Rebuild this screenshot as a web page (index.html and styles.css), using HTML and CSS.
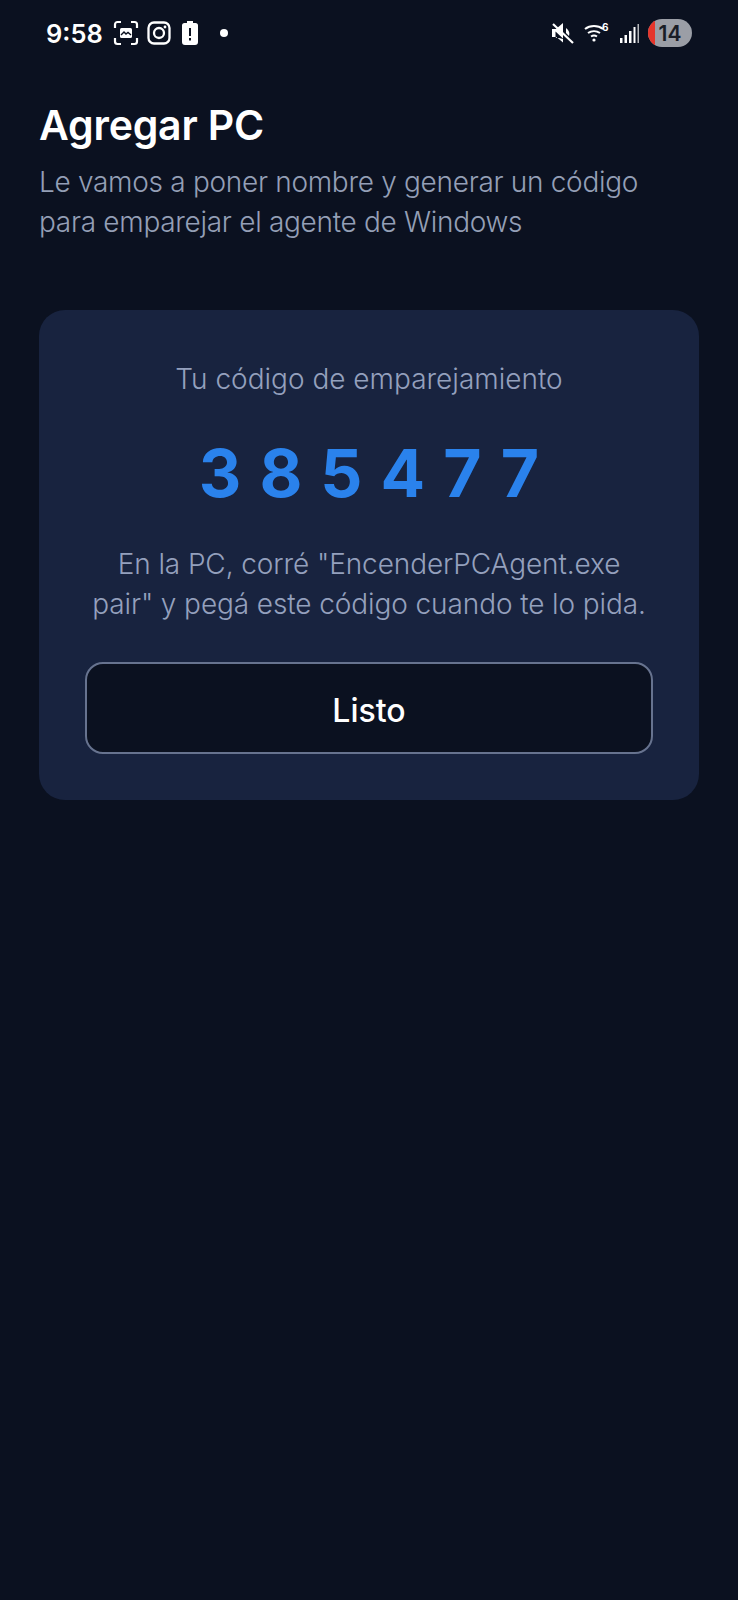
FILE: index.html
```html
<!DOCTYPE html>
<html lang="es">
<head>
  <meta charset="UTF-8" />
  <title>Agregar PC</title>
  <link rel="stylesheet" href="styles.css">
</head>
<body>
  <div id="app">
    <div class="status">
      <div class="status-left">
        <span class="time">9:58</span>
        <svg class="ic" width="26" height="26" viewBox="0 0 26 26" fill="none" stroke="#fff" stroke-width="2.2">
          <path d="M2 8V4.500A2.500 2.500 0 0 1 4.500 2H8M18 2h3.500A2.500 2.500 0 0 1 24 4.500V8M24 18v3.500a2.500 2.500 0 0 1-2.500 2.500H18M8 24H4.500A2.500 2.500 0 0 1 2 21.500V18"/>
          <rect x="7" y="8" width="12" height="10" rx="1.500" fill="#fff" stroke="none"/>
          <path d="M8 15l3-3 2 2 2-1.500 3 2.500" stroke="#0b1120" stroke-width="1.400"/>
        </svg>
        <svg class="ic" width="24" height="24" viewBox="0 0 24 24" fill="none" stroke="#fff" stroke-width="2.300">
          <rect x="1.500" y="1.500" width="21" height="21" rx="5.500"/>
          <circle cx="12" cy="12" r="5"/>
          <circle cx="18" cy="6" r="1.400" fill="#fff" stroke="none"/>
        </svg>
        <svg class="ic batt" width="16" height="24" viewBox="0 0 16 24">
          <path fill="#fff" fill-rule="evenodd" d="M5 0h6v2h2.500A2.500 2.500 0 0 1 16 4.500V21a3 3 0 0 1-3 3H3a3 3 0 0 1-3-3V4.500A2.500 2.500 0 0 1 2.500 2H5zM7 7v8h2V7zM7 17v2.500h2V17z"/>
        </svg>
        <span class="dot"></span>
      </div>
      <div class="status-right">
        <svg class="ic mute" width="22" height="22" viewBox="0 0 22 22">
          <path fill="#fff" d="M0 7h4l7-6v15.500L3.500 9.500V15H0z"/>
          <path fill="#fff" d="M3 15h1.500l6.500 5.500V17z"/>
          <path stroke="#fff" stroke-width="2.200" d="M1 2l20 19"/>
          <path fill="#fff" d="M14 6c3 2 4 5 3 8l-3-3z"/>
        </svg>
        <svg class="ic wifi" width="25" height="22" viewBox="0 0 25 22" fill="none" stroke="#fff" stroke-width="2">
          <path d="M1 7c5-4 13-4 18 0M4 11c3.500-2.500 8.500-2.500 12 0M7 14.500c2-1.300 4-1.300 6 0"/>
          <circle cx="10" cy="18" r="1.600" fill="#fff" stroke="none"/>
          <text x="18" y="9" class="wifi-six">6</text>
        </svg>
        <svg class="ic" width="20" height="22" viewBox="0 0 20 22" fill="#fff">
          <rect x="0" y="16" width="2.500" height="5"/>
          <rect x="4.500" y="13" width="2.500" height="8"/>
          <rect x="9" y="9" width="2.500" height="12"/>
          <rect x="13.500" y="5" width="2" height="16"/>
          <rect x="17.500" y="2" width="1.500" height="19" opacity=".7"/>
        </svg>
        <span class="badge"><span class="badge-fill"></span><span class="badge-num">14</span></span>
      </div>
    </div>

    <div class="page">
      <h1>Agregar PC</h1>
      <p class="sub">Le vamos a poner nombre y generar un código para emparejar el agente de Windows</p>

      <div class="card">
        <p class="label">Tu código de emparejamiento</p>
        <div class="code">385477</div>
        <p class="help">En la PC, corré "EncenderPCAgent.exe pair" y pegá este código cuando te lo pida.</p>
        <button class="btn">Listo</button>
      </div>
    </div>
  </div>
</body>
</html>
```

FILE: styles.css
```css
* {
  box-sizing: border-box;
}
body {
  margin: 0;
  background: #0b1120;
  font-family: Inter, "Noto Sans", sans-serif;
}
#app {
  width: 738px;
  height: 1600px;
  overflow: hidden;
}
.status {
  height: 66px;
  padding: 0 46px;
  display: flex;
  justify-content: space-between;
  align-items: center;
}
.status-left, .status-right {
  display: flex;
  align-items: center;
}
.time {
  color: #fff;
  font-size: 25.5px;
  font-weight: 600;
  margin-right: 10px;
}
.status-left .ic {
  margin-right: 8px;
}
.batt {
  margin-left: 3px;
}
.dot {
  width: 8px;
  height: 8px;
  margin-left: 14px;
  border-radius: 50%;
  background: #fff;
}
.status-right .ic {
  margin-right: 8px;
}
.status-right .mute {
  margin-right: 10px;
}
.status-right .wifi {
  margin-right: 11px;
}
.wifi-six {
  fill: #fff;
  stroke: none;
  font-size: 10px;
  font-weight: 700;
  font-family: Inter, sans-serif;
}
.badge {
  position: relative;
  width: 44px;
  height: 28px;
  border-radius: 14px;
  background: #9b9ea6;
  overflow: hidden;
  display: flex;
  align-items: center;
  justify-content: center;
}
.badge-fill {
  position: absolute;
  left: 0;
  top: 0;
  bottom: 0;
  width: 7px;
  background: #e5352b;
}
.badge-num {
  position: relative;
  color: #1a1d26;
  font-size: 21px;
  font-weight: 600;
}
.page {
  padding: 34px 39px 0;
}
h1 {
  margin: 0;
  color: #fff;
  font-size: 41px;
  font-weight: 600;
  line-height: 50px;
  letter-spacing: -0.2px;
}
.sub {
  margin: 12px 0 0;
  color: #949fb6;
  font-size: 28px;
  font-weight: 300;
  line-height: 40px;
  letter-spacing: -0.3px;
}
.card {
  margin-top: 68px;
  height: 490px;
  padding: 49px 46px 46px;
  background: #18233f;
  border-radius: 26px;
  text-align: center;
}
.label {
  margin: 0;
  color: #94a0bd;
  font-size: 28px;
  font-weight: 300;
  line-height: 40px;
}
.code {
  margin-top: 36px;
  color: #2a82ec;
  font-size: 66px;
  font-weight: 700;
  line-height: 76px;
  letter-spacing: 18px;
  padding-left: 18px;
}
.help {
  margin: 33px 0 0;
  color: #94a0bd;
  font-size: 28px;
  font-weight: 300;
  line-height: 40px;
  letter-spacing: -0.1px;
}
.btn {
  display: block;
  width: 100%;
  height: 92px;
  margin-top: 38px;
  padding-top: 6px;
  background: #0b1120;
  border: 2px solid #67738f;
  border-radius: 18px;
  color: #fff;
  font-family: inherit;
  font-size: 32px;
  font-weight: 500;
}
```
